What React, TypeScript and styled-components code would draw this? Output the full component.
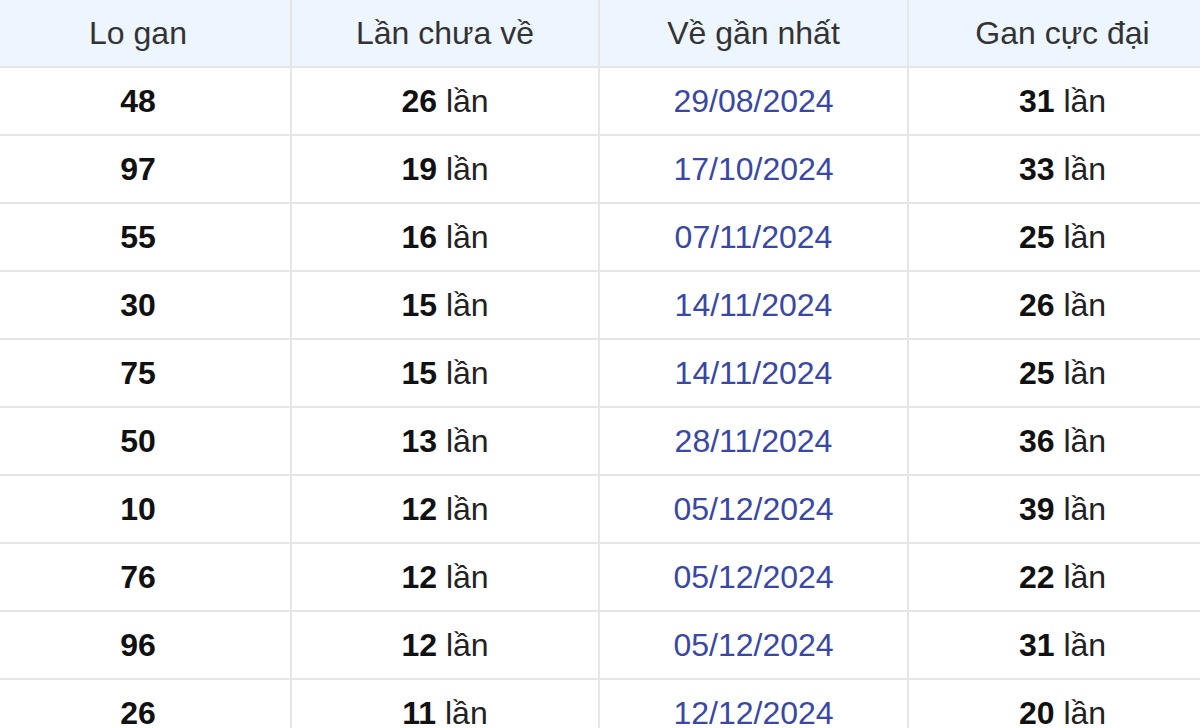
import React from "react";
import styled, { createGlobalStyle } from "styled-components";

const GlobalStyle = createGlobalStyle`
  html, body {
    margin: 0;
    padding: 0;
    background: #fff;
    overflow: hidden;
  }
  body {
    font-family: "Liberation Sans", Arial, sans-serif;
  }
`;

const Wrapper = styled.div`
  width: 1200px;
  height: 728px;
  overflow: hidden;
`;

const Table = styled.table`
  width: 1232px;
  margin-left: -16px;
  margin-top: -2px;
  border-collapse: collapse;
  table-layout: fixed;
  font-size: 32px;
`;

const HeadCell = styled.th`
  height: 66px;
  padding: 0;
  background: #edf5fe;
  color: #333;
  font-weight: normal;
  text-align: center;
  border: 2px solid #e4e6e8;
`;

const Cell = styled.td`
  height: 66px;
  padding: 0;
  text-align: center;
  color: #222;
  border: 2px solid #e6e6e6;
`;

const Num = styled.b`
  color: #111;
  font-weight: bold;
`;

const DateText = styled.span`
  color: #3848a4;
`;

const rows = [
  ["48", "26", "29/08/2024", "31"],
  ["97", "19", "17/10/2024", "33"],
  ["55", "16", "07/11/2024", "25"],
  ["30", "15", "14/11/2024", "26"],
  ["75", "15", "14/11/2024", "25"],
  ["50", "13", "28/11/2024", "36"],
  ["10", "12", "05/12/2024", "39"],
  ["76", "12", "05/12/2024", "22"],
  ["96", "12", "05/12/2024", "31"],
  ["26", "11", "12/12/2024", "20"],
];

const Times = ({ n }: { n: string }) => (
  <>
    <Num>{n}</Num> lần
  </>
);

export default function App() {
  return (
    <Wrapper>
      <GlobalStyle />
      <Table>
        <colgroup>
          <col style={{ width: 306 }} />
          <col style={{ width: 308 }} />
          <col style={{ width: 309 }} />
          <col style={{ width: 309 }} />
        </colgroup>
        <thead>
          <tr>
            <HeadCell>Lo gan</HeadCell>
            <HeadCell>Lần chưa về</HeadCell>
            <HeadCell>Về gần nhất</HeadCell>
            <HeadCell>Gan cực đại</HeadCell>
          </tr>
        </thead>
        <tbody>
          {rows.map((r, i) => (
            <tr key={i}>
              <Cell>
                <Num>{r[0]}</Num>
              </Cell>
              <Cell>
                <Times n={r[1]} />
              </Cell>
              <Cell>
                <DateText>{r[2]}</DateText>
              </Cell>
              <Cell>
                <Times n={r[3]} />
              </Cell>
            </tr>
          ))}
        </tbody>
      </Table>
    </Wrapper>
  );
}
